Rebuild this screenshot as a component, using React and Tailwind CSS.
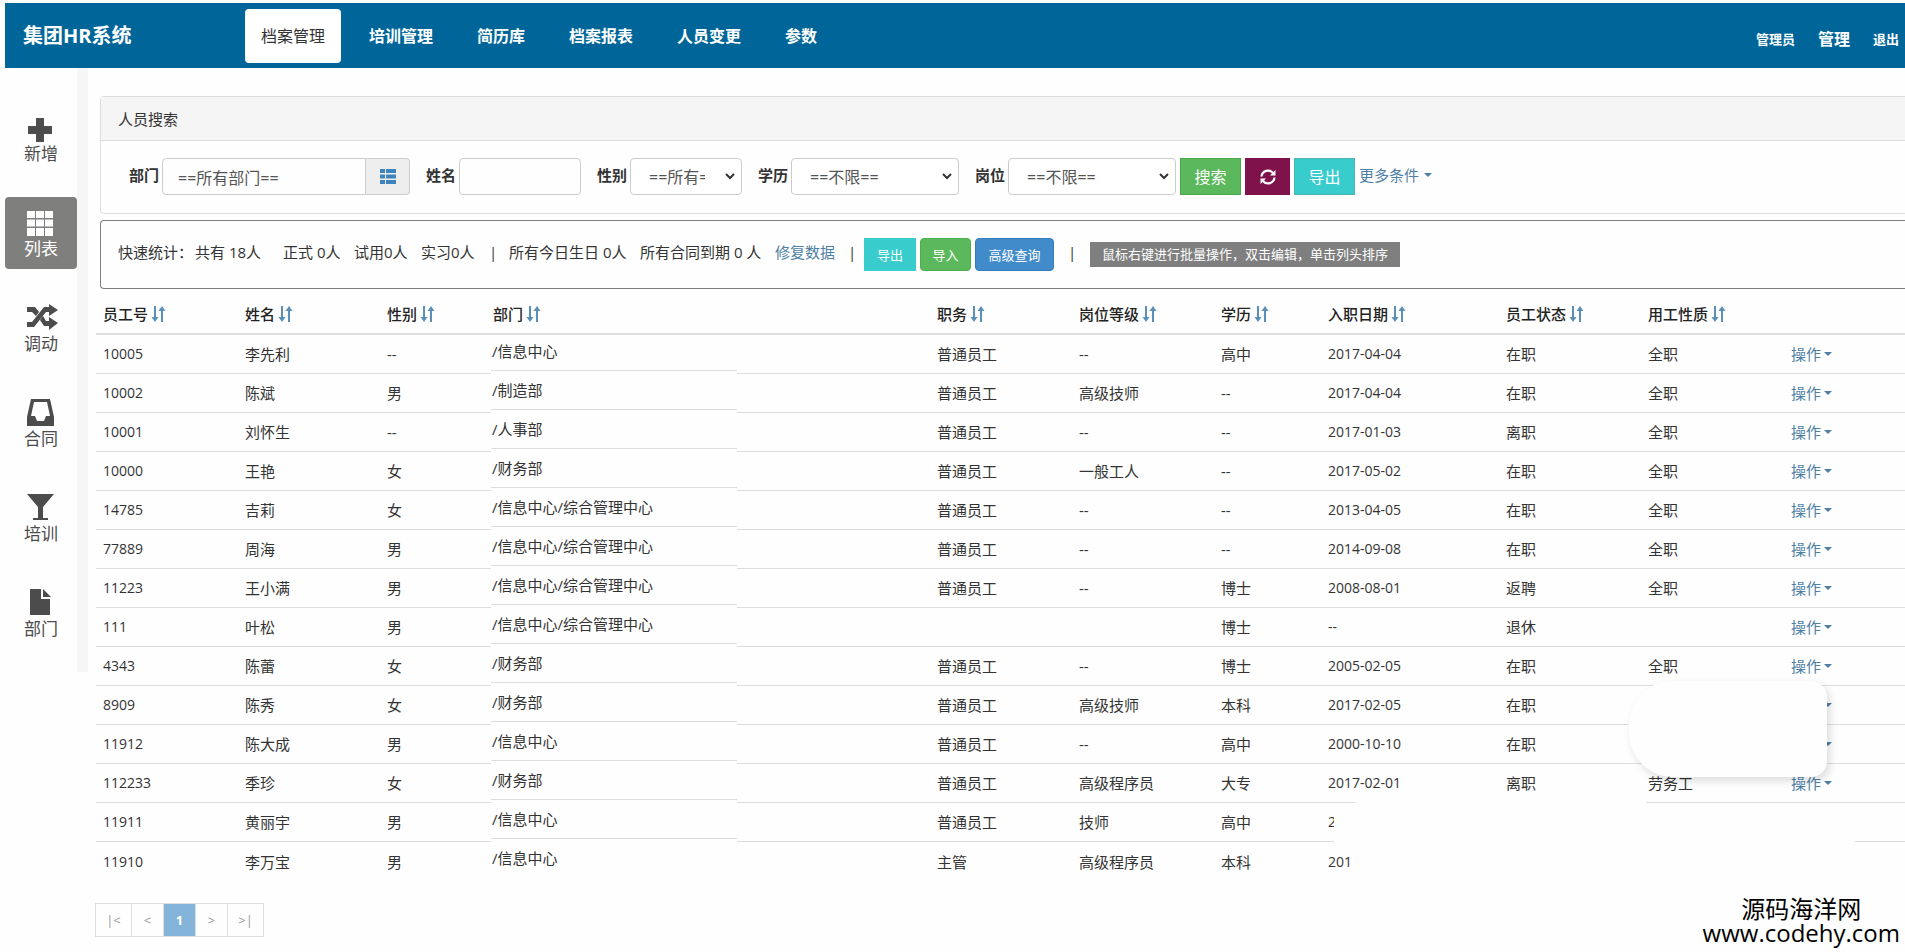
import React from 'react';

const ICONS = {
    plus: <path d="M11 4h8v8h8v8h-8v8h-8v-8H3v-8h8z" />,
    th: (
        <path d="M2 2h8v7H2zM11 2h8v7h-8zM20 2h8v7h-8zM2 10.500h8v7H2zM11 10.500h8v7h-8zM20 10.500h8v7h-8zM2 19h8v8H2zM11 19h8v8h-8zM20 19h8v8h-8z" />
    ),
    random: (
        <path d="M2 3h8l4 5-3 4-4-4H2zM2 18h5L19 3h5V0l9 6-9 6V8h-3L9 23H2zM15 16l3-4 3 5h3v-4l9 6-9 7v-4h-5z" />
    ),
    inbox: <path fillRule="evenodd" d="M6 0h19l4 18v9H2v-9zM9 3L6 17h4l2 5h7l2-5h4L22 3z" />,
    glass: <path d="M2 0h27L18 13v11h5v2H8v-2h5V13z" />,
    file: <path d="M5 0h11v10h9v16H5zM18 0l8 8h-8z" />,
};

const sideItems = [
    { label: '新增', icon: 'plus' },
    { label: '列表', icon: 'th', active: true },
    { label: '调动', icon: 'random' },
    { label: '合同', icon: 'inbox' },
    { label: '培训', icon: 'glass' },
    { label: '部门', icon: 'file' },
];

const navItems = ['档案管理', '培训管理', '简历库', '档案报表', '人员变更', '参数'];

const columns = [
    { title: '员工号', width: 'w-[142px]' },
    { title: '姓名', width: 'w-[142px]' },
    { title: '性别', width: 'w-[106px]' },
    { title: '部门', width: 'w-[444px]' },
    { title: '职务', width: 'w-[142px]' },
    { title: '岗位等级', width: 'w-[142px]' },
    { title: '学历', width: 'w-[107px]' },
    { title: '入职日期', width: 'w-[178px]' },
    { title: '员工状态', width: 'w-[142px]' },
    { title: '用工性质', width: 'w-[142px]' },
];

const rows = [
    ['10005', '李先利', '--', '/信息中心', '普通员工', '--', '高中', '2017-04-04', '在职', '全职', 'full'],
    ['10002', '陈斌', '男', '/制造部', '普通员工', '高级技师', '--', '2017-04-04', '在职', '全职', 'full'],
    ['10001', '刘怀生', '--', '/人事部', '普通员工', '--', '--', '2017-01-03', '离职', '全职', 'full'],
    ['10000', '王艳', '女', '/财务部', '普通员工', '一般工人', '--', '2017-05-02', '在职', '全职', 'full'],
    ['14785', '吉莉', '女', '/信息中心/综合管理中心', '普通员工', '--', '--', '2013-04-05', '在职', '全职', 'full'],
    ['77889', '周海', '男', '/信息中心/综合管理中心', '普通员工', '--', '--', '2014-09-08', '在职', '全职', 'full'],
    ['11223', '王小满', '男', '/信息中心/综合管理中心', '普通员工', '--', '博士', '2008-08-01', '返聘', '全职', 'full'],
    ['111', '叶松', '男', '/信息中心/综合管理中心', '', '', '博士', '--', '退休', '', 'full'],
    ['4343', '陈蕾', '女', '/财务部', '普通员工', '--', '博士', '2005-02-05', '在职', '全职', 'full'],
    ['8909', '陈秀', '女', '/财务部', '普通员工', '高级技师', '本科', '2017-02-05', '在职', '', 'caret'],
    ['11912', '陈大成', '男', '/信息中心', '普通员工', '--', '高中', '2000-10-10', '在职', '', 'caret'],
    ['112233', '季珍', '女', '/财务部', '普通员工', '高级程序员', '大专', '2017-02-01', '离职', '劳务工', 'full'],
    ['11911', '黄丽宇', '男', '/信息中心', '普通员工', '技师', '高中', '2', '', '', ''],
    ['11910', '李万宝', '男', '/信息中心', '主管', '高级程序员', '本科', '201', '', '', ''],
];

const SortIcon = () => (
    <svg viewBox="0 0 15 16" fill="currentColor" className="h-4 w-[15px] text-[#5a90b8]" aria-hidden="true">
        <path d="M3 0h2v11h2.500L4 16 .5 11H3zM10 16h2V5h2.500L11 0 7.500 5H10z" />
    </svg>
);

const Caret = () => (
    <svg viewBox="0 0 8 4" fill="currentColor" className="h-1 w-2 shrink-0" aria-hidden="true">
        <path d="M0 0h8L4 4z" />
    </svg>
);

const ListIcon = () => (
    <svg viewBox="0 0 16 15" fill="currentColor" className="h-[15px] w-4 text-[#3f83bd]" aria-hidden="true">
        <path d="M0 0h5v4H0zM6 0h10v4H6zM0 5.500h5v4H0zM6 5.500h10v4H6zM0 11h5v4H0zM6 11h10v4H6z" />
    </svg>
);

const RefreshIcon = () => (
    <svg viewBox="0 0 16 16" fill="none" stroke="currentColor" strokeWidth="2.200" className="size-4" aria-hidden="true">
        <path d="M1.500 7.500A6.500 6.500 0 0 1 13 4" />
        <path d="M14.500 8.500A6.500 6.500 0 0 1 3 12" />
        <path d="M15.500 1v5.500H10zM.5 15V9.500H6z" fill="currentColor" stroke="none" />
    </svg>
);

const Field = ({ id, label, children }) => (
    <div className="flex items-center gap-[3px]">
        <label htmlFor={id} className="pb-1 font-bold">{label}</label>
        {children}
    </div>
);

const SelectBox = ({ id, className, option }) => (
    <div className={`relative ${className}`}>
        <select id={id} className="h-[37px] w-full appearance-none rounded-sm border border-[#ccc] bg-white pr-9 pl-[18px] text-base text-[#555]">
            <option>{option}</option>
        </select>
        <svg viewBox="0 0 10 7" fill="none" stroke="#333" strokeWidth="2" className="pointer-events-none absolute top-[15px] right-[7px] h-[7px] w-[10px]">
            <path d="M1 1l4 4 4-4" />
        </svg>
    </div>
);

function Header() {
    return (
        <header className="flex h-[65px] items-center bg-[#006699] pr-[6px] font-bold text-white">
            <h1 className="w-[240px] pl-[18px] text-xl">集团HR系统</h1>
            <nav className="flex gap-3 text-base">
                {navItems.map((item, i) => (
                    <a
                        key={item}
                        href="#"
                        className={`flex h-[54px] items-center rounded px-4 ${i === 0 ? 'bg-white font-normal text-[#333]' : ''}`}
                    >
                        {item}
                    </a>
                ))}
            </nav>
            <div className="ml-auto flex items-center gap-[23px] pt-[6px] text-[13px]">
                <a href="#">管理员</a>
                <a href="#" className="text-base">管理</a>
                <a href="#">退出</a>
            </div>
        </header>
    );
}

function Sidebar() {
    return (
        <aside className="flex shrink-0 self-start border-r-[11px] border-[#f6f6f6] pt-[34px] pb-[23px]">
            <nav className="flex flex-col gap-[23px]">
                {sideItems.map((item) => (
                    <a
                        key={item.label}
                        href="#"
                        className={`flex h-[72px] w-[72px] flex-col items-center rounded pt-3 text-[17px] leading-6 ${item.active ? 'bg-[#7f7f7d] text-white' : 'text-[#4c4c4c]'}`}
                    >
                        <svg viewBox="0 0 32 28" fill="currentColor" className="h-7 w-8 overflow-visible" aria-hidden="true">
                            {ICONS[item.icon]}
                        </svg>
                        {item.label}
                    </a>
                ))}
            </nav>
        </aside>
    );
}

function SearchPanel() {
    return (
        <section className="ml-3 rounded-l border border-r-0 border-[#ddd]">
            <h2 className="border-b border-[#ddd] bg-[#f5f5f5] px-[17px] pt-[11px] pb-[10px]">人员搜索</h2>
            <form className="flex items-center gap-4 px-7 pt-[17px] pb-[18px]">
                <Field id="dept" label="部门">
                    <div className="flex">
                        <input
                            id="dept"
                            defaultValue="==所有部门=="
                            className="h-[37px] w-[204px] rounded-l-sm border border-[#ccc] px-[15px] text-base text-[#555]"
                        />
                        <button type="button" aria-label="选择部门" className="flex w-[44px] items-center justify-center rounded-r-sm border border-l-0 border-[#ccc] bg-[#eee]">
                            <ListIcon />
                        </button>
                    </div>
                </Field>
                <Field id="name" label="姓名">
                    <input id="name" className="h-[37px] w-[122px] rounded-sm border border-[#ccc] px-3" />
                </Field>
                <Field id="gender" label="性别">
                    <SelectBox id="gender" className="w-[112px]" option="==所有==" />
                </Field>
                <Field id="degree" label="学历">
                    <SelectBox id="degree" className="w-[168px]" option="==不限==" />
                </Field>
                <div className="flex items-center gap-1">
                    <Field id="post" label="岗位">
                        <SelectBox id="post" className="w-[168px]" option="==不限==" />
                    </Field>
                    <button type="button" className="h-[37px] w-[61px] border border-[#4ca64c] bg-[#5cb85c] text-base text-white">搜索</button>
                    <button type="button" aria-label="刷新" className="flex h-[37px] w-[45px] items-center justify-center bg-[#80124b] text-white">
                        <RefreshIcon />
                    </button>
                    <button type="button" className="h-[37px] w-[61px] border border-[#4fb5ad] bg-[#39cccc] text-base text-white">导出</button>
                    <a href="#" className="flex items-center gap-[5px] pb-1 text-[#4f7fa5]">
                        更多条件 <Caret />
                    </a>
                </div>
            </form>
        </section>
    );
}

function StatsPanel() {
    return (
        <section className="mt-[6px] ml-3 flex h-[69px] items-center rounded-l border border-r-0 border-[#7d7d7d] pl-[17px]">
            <div className="flex items-center pb-[6px] whitespace-nowrap">
                <span className="w-[77px]">快速统计：</span>
                <span className="w-[88px]">共有 18人</span>
                <span className="w-[71px]">正式 0人</span>
                <span className="w-[67px]">试用0人</span>
                <span className="w-[68px]">实习0人</span>
                <span className="w-5">|</span>
                <span className="w-[131px]">所有今日生日 0人</span>
                <span className="w-[135px]">所有合同到期 0 人</span>
                <a href="#" className="w-[73px] text-[#4f7fa5]">修复数据</a>
                <span className="w-4">|</span>
            </div>
            <div className="flex items-center gap-1 text-[13px] text-white">
                <button type="button" className="h-[33px] w-[52px] bg-[#39cccc]">导出</button>
                <button type="button" className="h-[33px] w-[51px] rounded-sm border border-[#4cae4c] bg-[#5cb85c]">导入</button>
                <button type="button" className="h-[33px] w-[79px] rounded-sm border border-[#357ebd] bg-[#428bca]">高级查询</button>
            </div>
            <span className="w-9 pb-[6px] text-center">|</span>
            <span className="bg-[#7f7f7f] px-3 text-[13px] leading-[25px] whitespace-nowrap text-white">
                鼠标右键进行批量操作，双击编辑，单击列头排序
            </span>
        </section>
    );
}

function DeptCell({ value, last }) {
    // the name sits in its own box, a little shorter than the row
    const line = last ? '' : 'border-b border-[#ddd]';
    return (
        <div className="flex h-[39px]">
            <span className={`w-[5px] ${line}`} />
            <span className={`h-9 w-[246px] pt-[5px] pl-px ${line}`}>{value}</span>
            <span className={`flex-1 ${line}`} />
        </div>
    );
}

function StaffTable() {
    return (
        <table className="mt-[6px] ml-2 w-[calc(100%-8px)] table-fixed border-separate border-spacing-0 text-left">
            <thead>
                <tr>
                    {columns.map((col) => (
                        <th key={col.title} className={`h-10 border-b-2 border-[#ddd] px-[7px] text-[#222] ${col.width}`}>
                            <span className="flex items-center gap-[3px] font-medium">
                                {col.title}
                                <SortIcon />
                            </span>
                        </th>
                    ))}
                    <th className="border-b-2 border-[#ddd]" aria-label="操作" />
                </tr>
            </thead>
            <tbody>
                {rows.map((row, r) => {
                    const last = r === rows.length - 1;
                    const line = last ? '' : 'border-b border-[#ddd]';
                    return (
                        <tr key={row[0]}>
                            {row.slice(0, 10).map((cell, i) =>
                                i === 3 ? (
                                    <td key={i} className="p-0">
                                        <DeptCell value={cell} last={last} />
                                    </td>
                                ) : (
                                    <td key={i} className={`h-[39px] px-[7px] whitespace-nowrap ${line} ${i === 0 || i === 7 ? 'text-sm' : ''}`}>
                                        {cell}
                                    </td>
                                )
                            )}
                            <td className={`px-2 ${line}`}>
                                {row[10] === 'full' && (
                                    <a href="#" className="flex items-center gap-[3px] text-[#4f7fa5]">
                                        操作 <Caret />
                                    </a>
                                )}
                                {row[10] === 'caret' && (
                                    <a href="#" aria-label="操作" className="flex pl-[33px] text-[#4f7fa5]">
                                        <Caret />
                                    </a>
                                )}
                            </td>
                        </tr>
                    );
                })}
            </tbody>
        </table>
    );
}

function Pagination() {
    const cell = 'flex h-8 items-center justify-center border-r border-[#ddd]';
    return (
        <nav className="mt-[22px] ml-[7px] flex w-fit border-y border-l border-[#ddd] text-[13px] leading-4 text-[#999]">
            <button type="button" className={`${cell} w-9`}>|&lt;</button>
            <button type="button" className={`${cell} w-8`}>&lt;</button>
            <button type="button" className={`${cell} w-8 bg-[#84b4da] font-bold text-white`}>1</button>
            <button type="button" className={`${cell} w-8`}>&gt;</button>
            <button type="button" className={`${cell} w-9`}>&gt;|</button>
        </nav>
    );
}

export default function App() {
    return (
        <div className="relative overflow-hidden bg-[#fefefe] pt-[3px] pb-4 pl-[5px] font-['Open_Sans','Noto_Sans_CJK_SC',sans-serif] text-[15px] leading-[22px] text-[#333]">
            <Header />
            <div className="flex">
                <Sidebar />
                <main className="min-w-0 flex-1 pt-[28px]">
                    <SearchPanel />
                    <StatsPanel />
                    <div className="relative">
                        <StaffTable />
                        {/* blanked out areas over the table */}
                        <div className="absolute top-[386px] right-[78px] h-24 w-[198px] rounded-l-[44px] rounded-r-2xl bg-[#fefefe] shadow-[3px_4px_8px_rgba(0,0,0,0.13)]" />
                        <div className="absolute top-[506px] right-[255px] h-5 w-[298px] rounded-t-lg bg-[#fefefe]" />
                        <div className="absolute top-[516px] right-[50px] h-9 w-[521px] bg-[#fefefe]" />
                    </div>
                    <Pagination />
                </main>
            </div>
            <div className="absolute right-[5px] bottom-2 text-center text-2xl leading-6 text-black">
                <div>源码海洋网</div>
                <div>www.codehy.com</div>
            </div>
        </div>
    );
}
